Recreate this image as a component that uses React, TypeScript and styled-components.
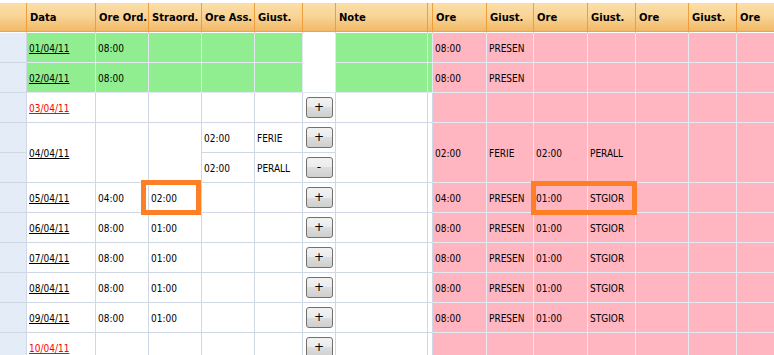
import React from 'react';
import styled, { createGlobalStyle } from 'styled-components';

const Global = createGlobalStyle`
  html, body { margin: 0; padding: 0; background: #fff; overflow: hidden; }
  body { font-family: "DejaVu Sans", Verdana, sans-serif; }
`;

const Page = styled.div`
  position: relative;
  box-sizing: border-box;
  padding-top: 3px;
  width: 774px;
  height: 355px;
  overflow: hidden;
  background: #fff;
`;

const Grid = styled.div`
  display: grid;
  grid-template-columns: 27px 69px 53px 53px 53px 48px 33px 92px 5px 54px 47px 54px 48px 53px 48px 54px;
  grid-auto-rows: 30px;
  width: max-content;
`;

const Head = styled.div`
  box-sizing: border-box;
  height: 30px;
  padding: 0 0 1px 3px;
  display: flex;
  align-items: center;
  background: linear-gradient(#fbdea8, #f9d496 45%, #f1b763) padding-box;
  border-right: 1px solid #ee9f3c;
  border-bottom: 1px solid #fff;
  box-shadow: inset 0 -1px 0 #eda447;
  font: bold 10px "DejaVu Sans", Verdana, sans-serif;
  color: #000;
  white-space: nowrap;
  overflow: hidden;
`;

type Tone = 'plain' | 'side' | 'green' | 'pink' | 'blank';

const bgOf: Record<Tone, string> = {
  plain: '#ffffff',
  side: '#e4ecf7',
  green: '#90ee90',
  pink: '#ffb6c1',
  blank: '#ffffff',
};

const lineOf: Record<Tone, string> = {
  plain: '#d0d7e5',
  side: '#d0d7e5',
  green: '#e2e8f0',
  pink: '#e4e9f2',
  blank: '#e2e8f0',
};

const Cell = styled.div<{ $tone: Tone; $span?: number; $center?: boolean }>`
  box-sizing: border-box;
  grid-row: span ${(p) => p.$span ?? 1};
  display: flex;
  align-items: center;
  justify-content: ${(p) => (p.$center ? 'center' : 'flex-start')};
  padding-left: ${(p) => (p.$center ? '0' : '2px')};
  padding-top: ${(p) => (p.$center ? '1px' : '2px')};
  background: ${(p) => bgOf[p.$tone]};
  border-right: 1px solid ${(p) => lineOf[p.$tone]};
  border-bottom: 1px solid ${(p) => lineOf[p.$tone]};
  font-family: "DejaVu Sans Condensed", "DejaVu Sans", Verdana, sans-serif;
  font-size: 10px;
  color: #000;
  white-space: nowrap;
  overflow: hidden;
`;

const DateLink = styled.a<{ $red?: boolean }>`
  color: ${(p) => (p.$red ? '#ff0000' : '#000')};
  text-decoration: underline;
  cursor: pointer;
`;

const Btn = styled.button`
  box-sizing: border-box;
  width: 27px;
  height: 21px;
  padding: 0 0 1px;
  margin-top: -1px;
  border: 1px solid #707070;
  border-radius: 3px;
  background: linear-gradient(#f2f2f2, #ebebeb 50%, #dddddd 50%, #cfcfcf);
  font: 12px "DejaVu Sans", Verdana, sans-serif;
  line-height: 1;
  color: #000;
  cursor: pointer;
`;

const Mark = styled.div<{ $x: number; $y: number; $w: number; $h: number }>`
  position: absolute;
  box-sizing: border-box;
  left: ${(p) => p.$x}px;
  top: ${(p) => p.$y}px;
  width: ${(p) => p.$w}px;
  height: ${(p) => p.$h}px;
  border: 5px solid #ff7f27;
  pointer-events: none;
`;

const headers = ['', 'Data', 'Ore Ord.', 'Straord.', 'Ore Ass.', 'Giust.', '', 'Note', '', 'Ore', 'Giust.', 'Ore', 'Giust.', 'Ore', 'Giust.', 'Ore'];

const Pinks: React.FC<{ values: string[]; span?: number }> = ({ values, span }) => (
  <>
    {Array.from({ length: 7 }).map((_, i) => (
      <Cell key={i} $tone="pink" $span={span}>
        {values[i] ?? ''}
      </Cell>
    ))}
  </>
);

type RowProps = {
  date: string;
  red?: boolean;
  ord?: string;
  stra?: string;
  btn?: string;
  pink?: string[];
};

const PlainRow: React.FC<RowProps> = ({ date, red, ord = '', stra = '', btn = '+', pink = [] }) => (
  <>
    <Cell $tone="side" />
    <Cell $tone="plain">
      <DateLink $red={red}>{date}</DateLink>
    </Cell>
    <Cell $tone="plain">{ord}</Cell>
    <Cell $tone="plain">{stra}</Cell>
    <Cell $tone="plain" />
    <Cell $tone="plain" />
    <Cell $tone="plain" $center>
      <Btn>{btn}</Btn>
    </Cell>
    <Cell $tone="plain" />
    <Cell $tone="plain" />
    <Pinks values={pink} />
  </>
);

const GreenRow: React.FC<{ date: string; first?: boolean }> = ({ date, first }) => (
  <>
    <Cell $tone="side" />
    <Cell $tone="green">
      <DateLink>{date}</DateLink>
    </Cell>
    <Cell $tone="green">08:00</Cell>
    <Cell $tone="green" />
    <Cell $tone="green" />
    <Cell $tone="green" />
    {first && <Cell $tone="blank" $span={2} />}
    <Cell $tone="green" />
    <Cell $tone="green" />
    <Pinks values={['08:00', 'PRESEN']} />
  </>
);

export default function App() {
  return (
    <>
      <Global />
      <Page>
        <Grid>
          {headers.map((h, i) => (
            <Head key={i}>{h}</Head>
          ))}

          <GreenRow date="01/04/11" first />
          <GreenRow date="02/04/11" />

          <PlainRow date="03/04/11" red />

          {/* 04/04/11: two sub-rows */}
          <Cell $tone="side" />
          <Cell $tone="plain" $span={2}>
            <DateLink>04/04/11</DateLink>
          </Cell>
          <Cell $tone="plain" $span={2} />
          <Cell $tone="plain" $span={2} />
          <Cell $tone="plain">02:00</Cell>
          <Cell $tone="plain">FERIE</Cell>
          <Cell $tone="plain" $center>
            <Btn>+</Btn>
          </Cell>
          <Cell $tone="plain" $span={2} />
          <Cell $tone="plain" $span={2} />
          <Pinks values={['02:00', 'FERIE', '02:00', 'PERALL']} span={2} />
          <Cell $tone="side" />
          <Cell $tone="plain">02:00</Cell>
          <Cell $tone="plain">PERALL</Cell>
          <Cell $tone="plain" $center>
            <Btn>-</Btn>
          </Cell>

          <PlainRow date="05/04/11" ord="04:00" stra="02:00" pink={['04:00', 'PRESEN', '01:00', 'STGIOR']} />
          <PlainRow date="06/04/11" ord="08:00" stra="01:00" pink={['08:00', 'PRESEN', '01:00', 'STGIOR']} />
          <PlainRow date="07/04/11" ord="08:00" stra="01:00" pink={['08:00', 'PRESEN', '01:00', 'STGIOR']} />
          <PlainRow date="08/04/11" ord="08:00" stra="01:00" pink={['08:00', 'PRESEN', '01:00', 'STGIOR']} />
          <PlainRow date="09/04/11" ord="08:00" stra="01:00" pink={['08:00', 'PRESEN', '01:00', 'STGIOR']} />
          <PlainRow date="10/04/11" red />
        </Grid>

        <Mark $x={141} $y={180} $w={60} $h={35} />
        <Mark $x={531} $y={181} $w={106} $h={34} />
      </Page>
    </>
  );
}
